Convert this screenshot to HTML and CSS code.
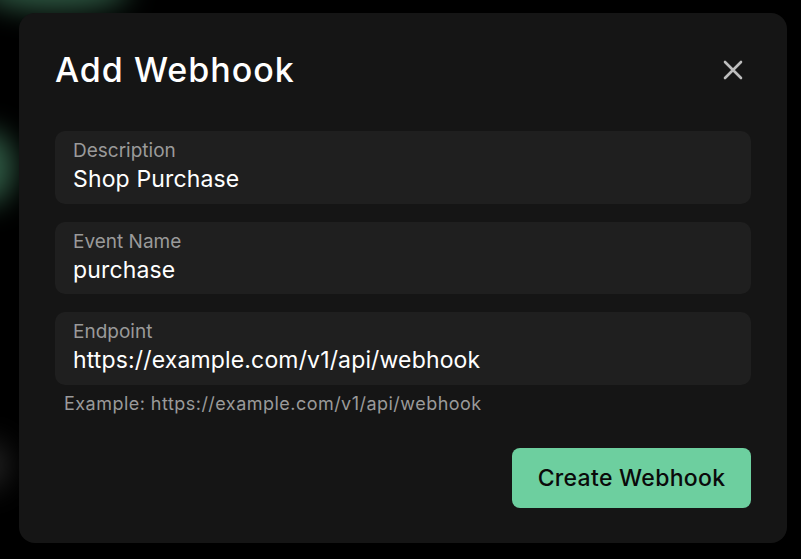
FILE: index.html
```html
<!DOCTYPE html>
<html>
<head>
<meta charset="utf-8">
<link rel="stylesheet" href="styles.css">
</head>
<body>
<div class="blob blob-top"></div>
<div class="blob blob-left"></div>
<div class="blob blob-grey"></div>
<div class="modal">
  <div class="modal-header">
    <h1 class="title">Add Webhook</h1>
    <button class="close" aria-label="Close">
      <svg width="20" height="20" viewBox="0 0 20 20"><path d="M2 2 L18 18 M18 2 L2 18" stroke="#bdbdbd" stroke-width="2.6" stroke-linecap="round"/></svg>
    </button>
  </div>
  <div class="fields">
    <div class="field">
      <div class="label">Description</div>
      <div class="value">Shop Purchase</div>
    </div>
    <div class="field">
      <div class="label">Event Name</div>
      <div class="value">purchase</div>
    </div>
    <div class="field-group">
      <div class="field">
        <div class="label">Endpoint</div>
        <div class="value">https://example.com/v1/api/webhook</div>
      </div>
      <div class="hint">Example: https://example.com/v1/api/webhook</div>
    </div>
  </div>
  <div class="actions">
    <button class="primary">Create Webhook</button>
  </div>
</div>
</body>
</html>
```
FILE: styles.css
```css
* { box-sizing: border-box; }
html, body { margin: 0; padding: 0; }
body {
  width: 801px;
  height: 559px;
  background: #000;
  overflow: hidden;
  font-family: Inter, "Noto Sans", sans-serif;
  position: relative;
}
.blob {
  position: absolute;
  border-radius: 50%;
  filter: blur(14px);
}
.blob-top {
  left: -20px; top: -30px; width: 150px; height: 40px;
  background: #2f5a44;
}
.blob-left {
  left: -40px; top: 130px; width: 55px; height: 75px;
  background: #2f5a44;
}
.blob-grey {
  left: -30px; top: 440px; width: 40px; height: 50px;
  background: #222;
}
.modal {
  position: relative;
  margin: 13px 0 0 19px;
  width: 768px;
  height: 530px;
  background: #151515;
  border-radius: 16px;
  padding: 33px 36px 35px;
  display: flex;
  flex-direction: column;
}
.modal-header {
  display: flex;
  justify-content: space-between;
  align-items: center;
  height: 48px;
  margin-bottom: 37px;
}
.title {
  margin: 0 0 0 0;
  font-size: 34px;
  line-height: 48px;
  font-weight: 500;
  color: #fff;
  letter-spacing: 1px;
}
.close {
  background: none;
  border: 0;
  padding: 0;
  width: 20px; height: 20px;
  margin-right: 8px;
  display: flex;
}
.fields {
  display: flex;
  flex-direction: column;
  gap: 18px;
}
.field {
  background: #1f1f1f;
  border-radius: 10px;
  height: 72.5px;
  padding: 8px 18px 0;
}
.label {
  font-size: 19px;
  line-height: 24px;
  color: #9a9a9a;
}
.value {
  margin-top: 2px;
  font-size: 23px;
  line-height: 28px;
  color: #fff;
  letter-spacing: 0.15px;
}
.hint {
  margin: 8px 0 0 9px;
  font-size: 18px;
  line-height: 22px;
  color: #9a9a9a;
  letter-spacing: 0.47px;
}
.actions {
  margin-top: auto;
  display: flex;
  justify-content: flex-end;
}
.primary {
  width: 239px;
  height: 60px;
  border: 0;
  border-radius: 8px;
  background: #6dcf9f;
  color: #0a0a0a;
  font-family: inherit;
  font-size: 23px;
  font-weight: 500;
  letter-spacing: 0.3px;
}
```
